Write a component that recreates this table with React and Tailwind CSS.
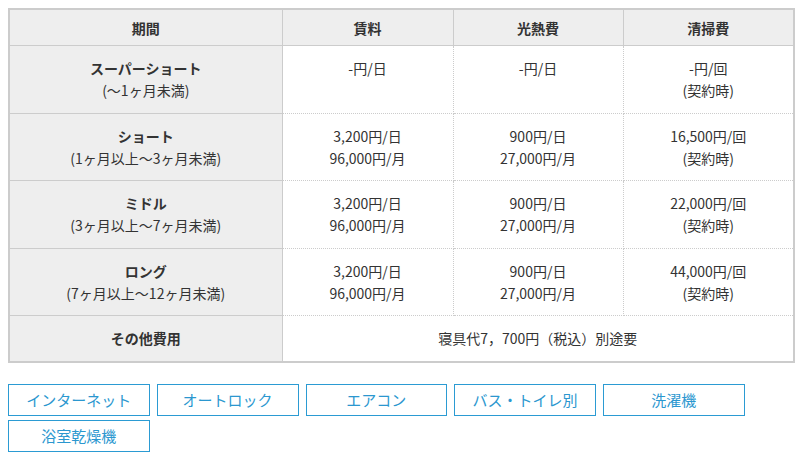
const rows = [
	{
		name: "スーパーショート",
		term: "(〜1ヶ月未満)",
		rent: ["-円/日"],
		utility: ["-円/日"],
		cleaning: ["-円/回", "(契約時)"],
	},
	{
		name: "ショート",
		term: "(1ヶ月以上〜3ヶ月未満)",
		rent: ["3,200円/日", "96,000円/月"],
		utility: ["900円/日", "27,000円/月"],
		cleaning: ["16,500円/回", "(契約時)"],
	},
	{
		name: "ミドル",
		term: "(3ヶ月以上〜7ヶ月未満)",
		rent: ["3,200円/日", "96,000円/月"],
		utility: ["900円/日", "27,000円/月"],
		cleaning: ["22,000円/回", "(契約時)"],
	},
	{
		name: "ロング",
		term: "(7ヶ月以上〜12ヶ月未満)",
		rent: ["3,200円/日", "96,000円/月"],
		utility: ["900円/日", "27,000円/月"],
		cleaning: ["44,000円/回", "(契約時)"],
	},
];

const features = ["インターネット", "オートロック", "エアコン", "バス・トイレ別", "洗濯機", "浴室乾燥機"];

const th = "border border-[#ccc] bg-[#eee] font-bold align-top";
const td = "border border-dotted border-[#ccc] bg-white align-top px-2 py-[11.25px]";

function Lines({ items }) {
	return items.map((t, i) => <div key={i}>{t}</div>);
}

export default function App() {
	return (
		<div className="bg-white w-[802px] h-[460px] px-2 pt-[8px] font-['Noto_Sans_CJK_JP','Noto_Sans',sans-serif] text-[14px] leading-[22px] text-[#333]">
			<table className="w-[785px] table-fixed border-collapse border-2 border-[#ccc] text-center">
				<colgroup>
					<col className="w-[273px]" />
					<col className="w-[171px]" />
					<col className="w-[170px]" />
					<col className="w-[171px]" />
				</colgroup>
				<thead>
					<tr>
						<th className={`${th} pt-[7px] pb-[6px]`}>期間</th>
						<th className={`${th} pt-[7px] pb-[6px]`}>賃料</th>
						<th className={`${th} pt-[7px] pb-[6px]`}>光熱費</th>
						<th className={`${th} pt-[7px] pb-[6px]`}>清掃費</th>
					</tr>
				</thead>
				<tbody>
					{rows.map((r) => (
						<tr key={r.name}>
							<th className={`${th} px-2 py-[11.25px]`}>
								<div>{r.name}</div>
								<div className="font-normal">{r.term}</div>
							</th>
							<td className={td}>
								<Lines items={r.rent} />
							</td>
							<td className={td}>
								<Lines items={r.utility} />
							</td>
							<td className={td}>
								<Lines items={r.cleaning} />
							</td>
						</tr>
					))}
					<tr>
						<th className={`${th} px-2 py-[11.25px]`}>その他費用</th>
						<td className={td} colSpan={3}>
							寝具代7，700円（税込）別途要
						</td>
					</tr>
				</tbody>
			</table>

			<ul className="mt-[21px] flex flex-wrap gap-x-[7px] gap-y-[4px] w-[786px]">
				{features.map((f) => (
					<li
						key={f}
						className="w-[141.75px] h-[32px] flex items-center justify-center border border-[#2b9bd3] text-[15px] text-[#2b97cf]"
					>
						{f}
					</li>
				))}
			</ul>
		</div>
	);
}
